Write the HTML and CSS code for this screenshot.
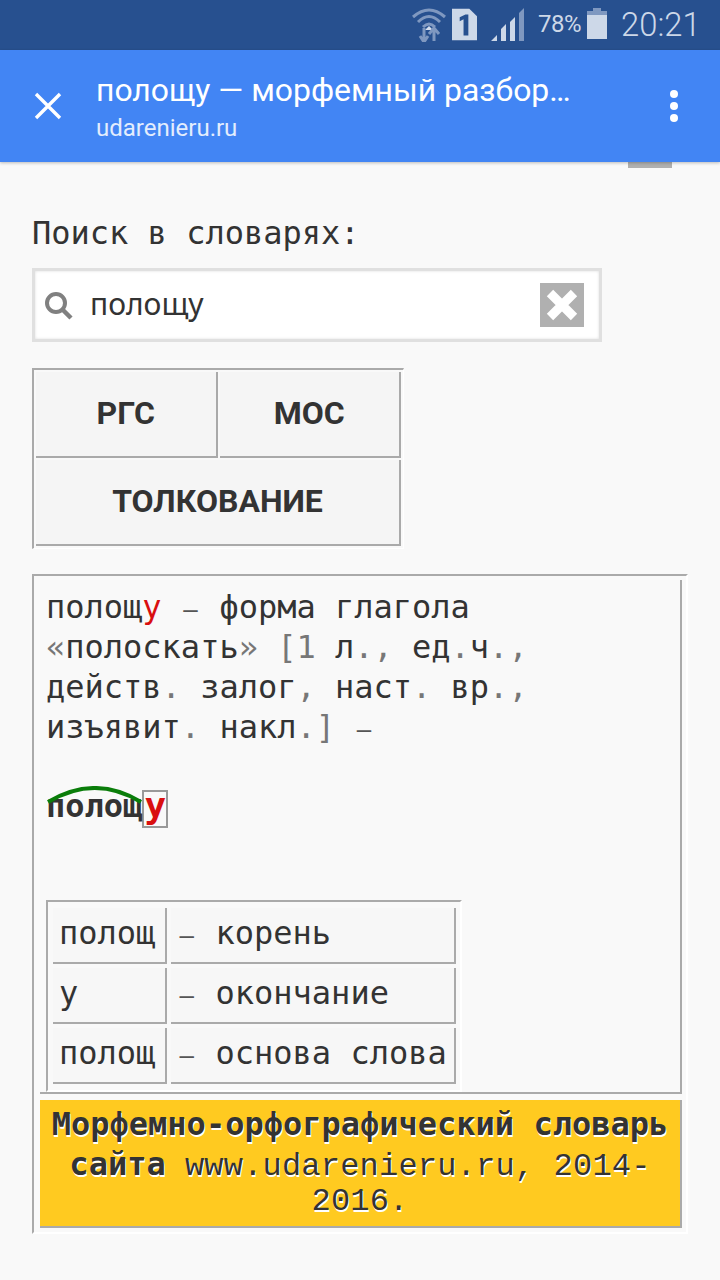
FILE: index.html
```html
<!DOCTYPE html>
<html lang="ru">
<head>
    <meta charset="UTF-8">
    <meta name="viewport" content="width=device-width, initial-scale=1.0">
    <title>полощу — морфемный разбор</title>
    <link rel="stylesheet" href="styles.css">
</head>
<body>

    <div class="statusbar">
        <svg class="ic-wifi" width="36" height="36" viewBox="0 0 36 36">
            <path d="M2 11 Q18 -3 34 11 M7 16 Q18 5 29 16 M12 21 Q18 15 24 21" fill="none" stroke="#7f98c0" stroke-width="3"/>
            <path d="M14 24 L18 20 L22 24 Z" fill="#d5dfee"/>
            <path d="M14 24 V37 M10 32 L14 38 L18 32" fill="none" stroke="#7f98c0" stroke-width="3" transform="translate(-1,-2)"/>
            <path d="M23 35 V24 M18 28 L23 22 L28 28" fill="none" stroke="#7f98c0" stroke-width="3"/>
        </svg>
        <svg class="ic-sim" width="25" height="33" viewBox="0 0 26 33">
            <path d="M0 0 H18 L26 8 V33 H0 Z" fill="#cdd8e8"/>
            <path d="M8 9 L14 6 H17 V28 H12 V11 L8 13 Z" fill="#27508f"/>
        </svg>
        <svg class="ic-signal" width="34" height="33" viewBox="0 0 34 33">
            <path d="M0 33 L6 27 V33 Z M10 33 V21 L15 16 V33 Z" fill="#cdd8e8"/>
            <path d="M19 33 V14 L24 9 V33 Z" fill="#cdd8e8"/>
            <path d="M28 33 V5 L33 0 V33 Z" fill="#7f98c0"/>
        </svg>
        <span class="battery-pct">78%</span>
        <svg class="ic-battery" width="20" height="31" viewBox="0 0 20 31">
            <path d="M6 0 H14 V3 H20 V9 H0 V3 H6 Z" fill="#7f98c0"/>
            <rect y="7" width="20" height="24" fill="#cdd8e8"/>
        </svg>
        <span class="clock">20:21</span>
    </div>

    <header class="toolbar">
        <svg class="ic-close" width="28" height="28" viewBox="0 0 28 28">
            <path d="M2 2 L26 26 M26 2 L2 26" stroke="#fff" stroke-width="3.4"/>
        </svg>
        <div class="toolbar-text">
            <div class="page-title">полощу — морфемный разбор…</div>
            <div class="page-host">udarenieru.ru</div>
        </div>
        <div class="more"><i></i><i></i><i></i></div>
    </header>

    <div class="scroll-row"><div class="scroll-tab"></div></div>

    <main class="content">
        <div class="search-label">Поиск в словарях:</div>

        <div class="search-box">
            <svg class="ic-search" width="30" height="30" viewBox="0 0 30 30">
                <circle cx="12" cy="12" r="9" fill="none" stroke="#808080" stroke-width="4"/>
                <path d="M18 18 L27 27" stroke="#808080" stroke-width="4.5"/>
            </svg>
            <span class="search-value">полощу</span>
            <div class="search-clear">
                <svg width="34" height="34" viewBox="0 0 34 34">
                    <path d="M5 5 L29 29 M29 5 L5 29" stroke="#fff" stroke-width="9"/>
                </svg>
            </div>
        </div>

        <div class="dict-tabs">
            <div class="dict-tab">РГС</div>
            <div class="dict-tab">МОС</div>
            <div class="dict-tab wide">ТОЛКОВАНИЕ</div>
        </div>

        <div class="result">
            <div class="result-cell">
                <p class="definition">полощ<span class="red">у</span> <span class="dash">–</span> форма глагола <span class="thin">«</span>полоскать<span class="thin">» [1</span> л<span class="thin">.,</span> ед<span class="thin">.</span>ч<span class="thin">.,</span> действ<span class="thin">.</span> залог<span class="thin">,</span> наст<span class="thin">.</span> вр<span class="thin">.,</span> изъявит<span class="thin">.</span> накл<span class="thin">.]</span> <span class="dash">–</span></p>

                <div class="morph">
                    <span class="root">полощ<svg class="arc" width="96" height="20" viewBox="0 0 96 20">
                        <path d="M1 16 Q48 -12 94 16" fill="none" stroke="#0a7d0a" stroke-width="4"/>
                    </svg></span><span class="ending">у</span>
                </div>

                <div class="parts">
                    <div class="part">полощ</div>
                    <div class="part"><span class="dash">–</span> корень</div>
                    <div class="part">у</div>
                    <div class="part"><span class="dash">–</span> окончание</div>
                    <div class="part">полощ</div>
                    <div class="part"><span class="dash">–</span> основа слова</div>
                </div>
            </div>

            <div class="source">
                <b>Морфемно-орфографический словарь сайта</b> <span class="source-url">www.udarenieru.ru, 2014-2016.</span>
            </div>
        </div>
    </main>

</body>
</html>
```

FILE: styles.css
```css
* {
    box-sizing: border-box;
}
body {
    margin: 0;
    background-color: #f9f9f9;
    color: #333;
    font-family: "DejaVu Sans Mono", monospace;
    font-size: 32px;
}

.statusbar {
    height: 50px;
    background: #27508f;
    color: #cdd8e8;
    display: flex;
    align-items: flex-start;
    font-family: Roboto, sans-serif;
    padding: 6px 0 0 411px;
}
.ic-wifi {
    margin-right: 5px;
}
.ic-sim {
    margin: 2px 14px 0 0;
}
.ic-signal {
    margin: 2px 13px 0 0;
}
.battery-pct {
    font-size: 24px;
    line-height: 36px;
    width: 49px;
    letter-spacing: -0.5px;
}
.ic-battery {
    margin: 2px 14px 0 0;
}
.clock {
    font-size: 32.8px;
    line-height: 38px;
    font-weight: 300;
}

.toolbar {
    height: 112px;
    background: #4285f4;
    color: #fff;
    display: flex;
    font-family: Roboto, sans-serif;
    box-shadow: 0 1px 3px rgba(0, 0, 0, 0.25);
    position: relative;
}
.ic-close {
    margin: 42px 34px 0 34px;
}
.toolbar-text {
    flex: 1;
    padding-top: 20px;
}
.page-title {
    font-size: 31.9px;
    line-height: 40px;
}
.page-host {
    font-size: 24px;
    line-height: 36px;
    color: #e3edfd;
}
.more {
    width: 92px;
    padding: 40px 0 0 0;
    display: flex;
    flex-direction: column;
    align-items: center;
    gap: 4px;
}
.more i {
    width: 8px;
    height: 8px;
    border-radius: 50%;
    background: #fff;
}

.scroll-row {
    height: 6px;
    padding-left: 628px;
}
.scroll-tab {
    width: 44px;
    height: 6px;
    background: #b0b0b0;
}

.content {
    padding: 45px 32px 0;
}
.search-label {
    line-height: 40px;
    height: 55px;
}
.search-box {
    width: 570px;
    height: 74px;
    background: #fff;
    border: 3px solid #e0e0e0;
    box-shadow: inset 0 0 3px #ddd;
    display: flex;
    align-items: center;
    padding: 0 15px 0 9px;
    font-family: "Noto Sans", sans-serif;
    font-size: 30px;
}
.ic-search {
    margin-top: 2px;
}
.search-value {
    flex: 1;
    margin: 0 0 4px 16px;
}
.search-clear {
    width: 44px;
    height: 44px;
    background: #b0b0b0;
    display: flex;
    align-items: center;
    justify-content: center;
}

.dict-tabs {
    margin-top: 26px;
    width: 372px;
    display: grid;
    grid-template-columns: 1fr 1fr;
    gap: 2px;
    padding: 2px;
    border: 1px solid;
    border-width: 2px 1px 1px 2px;
    border-color: #aaa #fff #fff #aaa;
    font-family: Roboto, sans-serif;
    font-weight: bold;
    font-size: 32px;
}
.dict-tab {
    height: 86px;
    padding-bottom: 2px;
    background: #f5f5f5;
    border-right: 2px solid #aaa;
    border-bottom: 2px solid #aaa;
    display: flex;
    align-items: center;
    justify-content: center;
}
.dict-tab.wide {
    grid-column: 1 / 3;
}

.result {
    margin-top: 25px;
    width: 656px;
    border: 2px solid;
    border-color: #aaa #fff #fff #aaa;
    padding: 4px 4px 4px 6px;
}
.result-cell {
    height: 514px;
    padding: 7px 6px 0 6px;
    border-right: 2px solid #aaa;
    border-bottom: 2px solid #aaa;
}
.definition {
    margin: 0;
    line-height: 40px;
}
.red {
    color: #d90f0f;
}
.thin {
    color: #777;
}
.dash {
    display: inline-block;
    width: 19.26px;
    line-height: 20px;
    text-align: center;
    font-size: 24px;
    color: #555;
}

.morph {
    margin-top: 39px;
    display: flex;
    align-items: flex-start;
    height: 40px;
    line-height: 40px;
    font-weight: bold;
}
.root {
    position: relative;
}
.arc {
    position: absolute;
    left: 1px;
    top: 0;
}
.ending {
    margin-top: 4px;
    width: 26px;
    height: 38px;
    border: 2px solid #999;
    color: #d90f0f;
    font-size: 36px;
    line-height: 28px;
    text-align: center;
}

.parts {
    margin-top: 74px;
    width: 416px;
    display: grid;
    grid-template-columns: 114px 285px;
    gap: 4px;
    padding: 6px 5px;
    border: 2px solid;
    border-color: #aaa #fff #fff #aaa;
}
.part {
    height: 56px;
    padding-left: 6px;
    line-height: 50px;
    background: #f7f7f7;
    border-right: 2px solid #aaa;
    border-bottom: 2px solid #aaa;
    white-space: nowrap;
}

.source {
    margin-top: 6px;
    height: 128px;
    background: #ffca20;
    border-right: 2px solid #aaa;
    border-bottom: 2px solid #aaa;
    padding: 4px 8px 0;
    text-align: center;
    text-shadow: 1px 2px 0 #fff;
    line-height: 30px;
}
.source b {
    line-height: 40px;
}
.source-url {
    font-family: "Liberation Mono", monospace;
    letter-spacing: 0.2px;
}
```
